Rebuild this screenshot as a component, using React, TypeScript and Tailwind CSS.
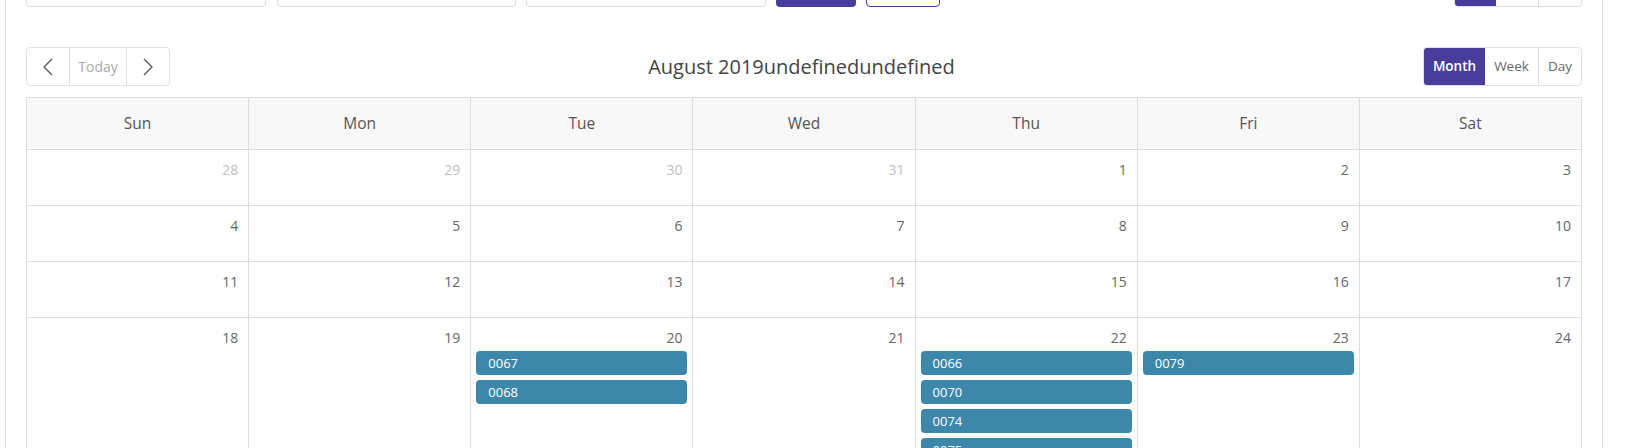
import React from "react";

const PURPLE = "bg-[#483d9b]";

type Cell = { d: number; muted?: boolean; events?: string[] };

const weeks: Cell[][] = [
  [{ d: 28, muted: true }, { d: 29, muted: true }, { d: 30, muted: true }, { d: 31, muted: true }, { d: 1 }, { d: 2 }, { d: 3 }],
  [{ d: 4 }, { d: 5 }, { d: 6 }, { d: 7 }, { d: 8 }, { d: 9 }, { d: 10 }],
  [{ d: 11 }, { d: 12 }, { d: 13 }, { d: 14 }, { d: 15 }, { d: 16 }, { d: 17 }],
  [
    { d: 18 },
    { d: 19 },
    { d: 20, events: ["0067", "0068"] },
    { d: 21 },
    { d: 22, events: ["0066", "0070", "0074", "0075"] },
    { d: 23, events: ["0079"] },
    { d: 24 },
  ],
];

const days = ["Sun", "Mon", "Tue", "Wed", "Thu", "Fri", "Sat"];

function Chevron({ dir }: { dir: "l" | "r" }) {
  return (
    <svg width="12" height="20" viewBox="0 0 12 20" fill="none">
      {dir === "l" ? (
        <path d="M10 2 L2 10 L10 18" stroke="#555" strokeWidth="1.3" />
      ) : (
        <path d="M2 2 L10 10 L2 18" stroke="#555" strokeWidth="1.3" />
      )}
    </svg>
  );
}

export default function App() {
  return (
    <div
      className="w-[1631px] h-[448px] overflow-hidden bg-white pl-[5px]"
      style={{ fontFamily: '"Open Sans", "Noto Sans", sans-serif' }}
    >
      <div className="w-[1598px] min-h-[448px] border-x border-[#e4e4e4] px-[20px]">
        {/* cut-off top toolbar */}
        <div className="h-[7px] overflow-hidden flex items-end">
          <div className="flex items-end w-full">
            <div className="w-[240px] h-[38px] border border-[#dcdcdc] rounded-[4px]" />
            <div className="w-[239px] h-[38px] border border-[#dcdcdc] rounded-[4px] ml-[11px]" />
            <div className="w-[240px] h-[38px] border border-[#dcdcdc] rounded-[4px] ml-[10px]" />
            <div className={`w-[80px] h-[38px] ${PURPLE} rounded-[4px] ml-[10px]`} />
            <div className="w-[74px] h-[38px] border border-[#483d9b] rounded-[4px] ml-[10px]" />
            <div className="ml-auto flex h-[38px] border border-[#dcdcdc] rounded-[4px] overflow-hidden">
              <div className={`w-[41px] ${PURPLE}`} />
              <div className="w-[43px] border-r border-[#dcdcdc]" />
              <div className="w-[42px]" />
            </div>
          </div>
        </div>

        {/* calendar toolbar */}
        <div className="mt-[40px] grid grid-cols-[1fr_auto_1fr] items-center h-[39px]">
          <div className="flex">
            <div className="flex h-[39px] border border-[#e0e0e0] rounded-[4px] text-[#aaa] text-[14px]">
              <div className="w-[43px] flex items-center justify-center border-r border-[#e0e0e0]">
                <Chevron dir="l" />
              </div>
              <div className="w-[57px] flex items-center justify-center border-r border-[#e0e0e0]">Today</div>
              <div className="w-[42px] flex items-center justify-center">
                <Chevron dir="r" />
              </div>
            </div>
          </div>
          <div className="text-[20px] text-[#444] leading-none pr-[5px]">August 2019undefinedundefined</div>
          <div className="flex justify-end">
            <div className="flex h-[39px] border border-[#e0e0e0] rounded-[4px] overflow-hidden text-[13.5px] text-[#666]">
              <div className={`w-[61px] ${PURPLE} text-white font-semibold flex items-center justify-center`}>Month</div>
              <div className="w-[54px] flex items-center justify-center border-r border-[#e0e0e0]">Week</div>
              <div className="w-[42px] flex items-center justify-center">Day</div>
            </div>
          </div>
        </div>

        {/* month grid */}
        <div className="mt-[11px] border-l border-t border-[#dddddd]">
          <div className="grid grid-cols-7 bg-[#f8f8f8]">
            {days.map((d) => (
              <div
                key={d}
                className="h-[52px] border-r border-b border-[#dddddd] flex items-center justify-center text-[15.5px] text-[#555]"
              >
                {d}
              </div>
            ))}
          </div>
          {weeks.map((w, i) => (
            <div key={i} className="grid grid-cols-7">
              {w.map((c, j) => (
                <div key={j} className="min-h-[56px] border-r border-b border-[#dddddd] pb-[6px]">
                  <div
                    className={`text-right text-[14px] leading-[20px] pt-[10px] pr-[10px] ${
                      c.muted ? "text-[#c0c0c0]" : "text-[#666]"
                    }`}
                  >
                    {c.d}
                  </div>
                  {c.events && (
                    <div className="mt-[3px] flex flex-col gap-[5px] px-[5px]">
                      {c.events.map((e) => (
                        <div
                          key={e}
                          className="h-[24px] rounded-[4px] bg-[#3d87ab] text-white text-[13px] leading-[24px] pl-[12px]"
                        >
                          {e}
                        </div>
                      ))}
                    </div>
                  )}
                </div>
              ))}
            </div>
          ))}
        </div>
      </div>
    </div>
  );
}
